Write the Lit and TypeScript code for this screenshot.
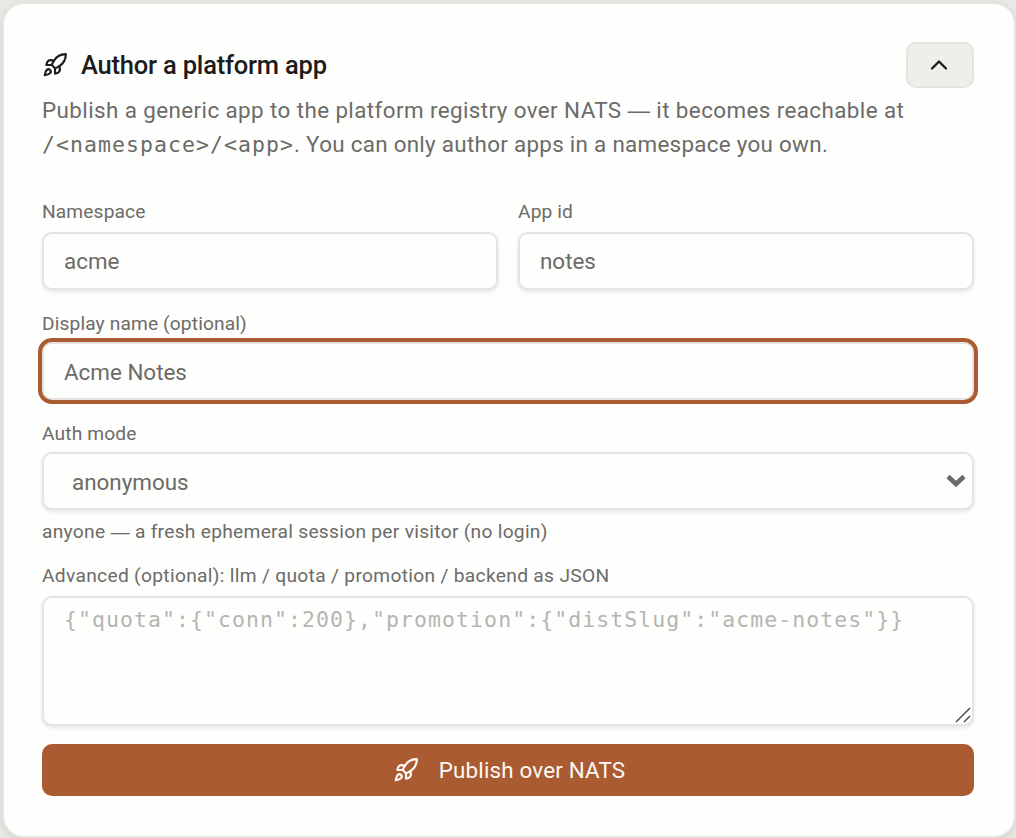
import { LitElement, html, css, svg } from "lit";
import { customElement } from "lit/decorators.js";

const rocket = svg`
  <path d="M4.5 16.5c-1.5 1.26-2 5-2 5s3.74-.5 5-2c.71-.84.7-2.13-.09-2.91a2.18 2.18 0 0 0-2.91-.09z"/>
  <path d="m12 15-3-3a22 22 0 0 1 2-3.95A12.88 12.88 0 0 1 22 2c0 2.72-.78 7.5-6 11a22.35 22.35 0 0 1-4 2z"/>
  <path d="M9 12H4s.55-3.03 2-4c1.62-1.08 5 0 5 0"/>
  <path d="M12 15v5s3.03-.55 4-2c1.08-1.62 0-5 0-5"/>`;

@customElement("app-root")
export class AppRoot extends LitElement {
  static styles = css`
    :host {
      display: block;
      box-sizing: border-box;
      height: 838px;
      padding: 2px 0 0 2px;
      overflow: hidden;
      background: #e9e8e5;
      color: #6b6b69;
      font-family: Roboto, "Liberation Sans", sans-serif;
      font-size: 22.4px;
      letter-spacing: 0.45px;
    }
    * { box-sizing: border-box; }
    svg {
      display: block;
      flex: none;
      fill: none;
      stroke: currentColor;
      stroke-width: 2;
      stroke-linecap: round;
      stroke-linejoin: round;
    }
    .card {
      display: flex;
      flex-direction: column;
      height: 836px;
      padding: 38px 40px 38px 38px;
      background: #fefefc;
      border: 2px solid #e5e4e2;
      border-radius: 22px;
      box-shadow: 0 2px 6px rgba(0, 0, 0, 0.1);
    }
    .head { display: flex; justify-content: space-between; height: 46px; }
    .title {
      display: flex;
      align-items: center;
      gap: 13px;
      margin: 0;
      color: #1c1c1b;
      font-size: 25.5px;
      font-weight: 500;
      letter-spacing: -0.2px;
      white-space: nowrap;
    }
    .toggle {
      display: grid;
      place-items: center;
      width: 68px;
      height: 46px;
      padding: 0 2px 0 0;
      color: #1c1c1b;
      background: #efeeeb;
      border: 2px solid #e5e4e2;
      border-radius: 10px;
    }
    .lead { margin: 5px 0 0; line-height: 34px; white-space: nowrap; }
    .l1 { display: block; letter-spacing: 0.41px; }
    .l2 { display: block; height: 34px; letter-spacing: 0.29px; }
    .dash { font-family: "Liberation Sans", sans-serif; line-height: 1; }
    code { font-family: "DejaVu Sans Mono", monospace; font-size: 21.5px; line-height: 1; letter-spacing: 1.06px; }
    .row { display: grid; grid-template-columns: 1fr 1fr; gap: 20px; margin-top: 37px; }
    .label {
      display: block;
      height: 28px;
      line-height: 28px;
      font-size: 19.2px;
      letter-spacing: 0.12px;
      white-space: nowrap;
    }
    .row .label { height: 34px; }
    .name { margin-top: 20px; }
    .name .label { height: 32px; }
    .auth { margin-top: 20px; }
    .auth .label { height: 32px; }
    .control {
      display: block;
      width: 100%;
      height: 58px;
      padding: 0 20px;
      background: #fefefc;
      color: #6b6b69;
      border: 2px solid #e5e4e2;
      border-radius: 10px;
      box-shadow: 0 2px 4px rgba(0, 0, 0, 0.1);
      font: inherit;
      letter-spacing: 0;
      outline: none;
      resize: none;
    }
    .control::placeholder { color: #6b6b69; opacity: 1; }
    .focused { padding-top: 1px; outline: 4px solid #aa5b32; }
    .select { display: flex; align-items: center; justify-content: space-between; padding: 2px 6px 0 28px; }
    .arrow { margin-bottom: 2px; stroke-width: 4.6; stroke-linecap: butt; stroke-linejoin: miter; }
    .hint { margin-top: 8px; letter-spacing: 0.28px; }
    .adv { margin-top: 16px; }
    .adv .label { height: 34px; letter-spacing: 0.31px; }
    .area { position: relative; height: 130px; }
    .json {
      height: 130px;
      padding: 6px 20px;
      font-family: "DejaVu Sans Mono", monospace;
      font-size: 21.5px;
      line-height: 32px;
      letter-spacing: 1.06px;
      white-space: pre;
      overflow: hidden;
    }
    .json::placeholder { color: #b5b5b3; }
    .grip { position: absolute; right: 3px; bottom: 3px; stroke: #555553; stroke-width: 1.6; stroke-linecap: butt; }
    .publish {
      display: flex;
      align-items: center;
      justify-content: center;
      gap: 20px;
      height: 52px;
      margin-top: 18px;
      padding: 0 0 0 2px;
      color: #fdf8f3;
      background: #aa5b32;
      border: 0;
      border-radius: 10px;
      font: inherit;
      letter-spacing: 0.18px;
    }
  `;

  render() {
    return html`
      <section class="card">
        <header class="head">
          <h2 class="title">
            <svg width="26" height="26" viewBox="0 0 24 24">${rocket}</svg>
            <span>Author a platform app</span>
          </h2>
          <button class="toggle" aria-label="Collapse">
            <svg width="28" height="28" viewBox="0 0 24 24"><path d="m18 15-6-6-6 6"/></svg>
          </button>
        </header>
        <p class="lead">
          <span class="l1">Publish a generic app to the platform registry over NATS <span class="dash">—</span> it becomes reachable at</span>
          <span class="l2"><code>/&lt;namespace&gt;/&lt;app&gt;</code>. You can only author apps in a namespace you own.</span>
        </p>
        <div class="row">
          <label><span class="label">Namespace</span><input class="control" placeholder="acme" /></label>
          <label><span class="label">App id</span><input class="control" placeholder="notes" /></label>
        </div>
        <label class="name">
          <span class="label">Display name (optional)</span>
          <input class="control focused" placeholder="Acme Notes" />
        </label>
        <div class="auth">
          <span class="label">Auth mode</span>
          <div class="control select" role="combobox">
            <span>anonymous</span>
            <svg class="arrow" width="20" height="14" viewBox="0 0 20 14"><path d="M2 2.5 10 10 18 2.5"/></svg>
          </div>
        </div>
        <span class="label hint">anyone <span class="dash">—</span> a fresh ephemeral session per visitor (no login)</span>
        <div class="adv">
          <span class="label">Advanced (optional): llm / quota / promotion / backend as JSON</span>
          <div class="area">
            <textarea class="control json" placeholder='{"quota":{"conn":200},"promotion":{"distSlug":"acme-notes"}}'></textarea>
            <svg class="grip" width="16" height="16" viewBox="0 0 16 16"><path d="M1 15 15 1M9 15l6-6"/></svg>
          </div>
        </div>
        <button class="publish">
          <svg width="26" height="26" viewBox="0 0 24 24">${rocket}</svg>
          <span>Publish over NATS</span>
        </button>
      </section>
    `;
  }
}
